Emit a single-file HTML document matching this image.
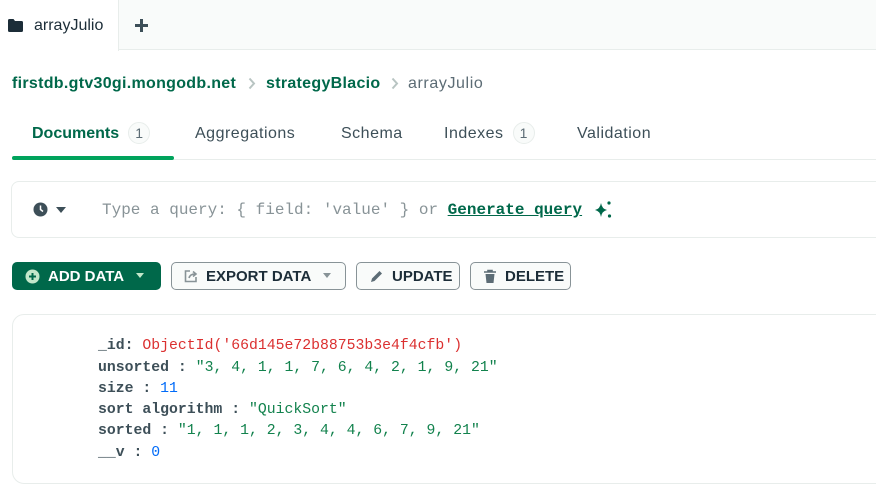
<!DOCTYPE html>
<html><head><style>
*{box-sizing:border-box;margin:0;padding:0}
body{width:876px;height:492px;overflow:hidden;background:#fff;font-family:"Liberation Sans",sans-serif;position:relative;color:#1c2d38}
.abs{position:absolute;white-space:nowrap}
.tabbar{left:0;top:0;width:876px;height:50px;background:#f9fbfa;border-bottom:1px solid #e8edeb}
.tab{left:0;top:0;width:119px;height:51px;background:#fff;border-right:1px solid #e8edeb}
.crumb{top:75px;font-size:16px;font-weight:bold;color:#00684a;letter-spacing:0.3px}
.nav{top:125px;font-size:16px;color:#3d4f58;letter-spacing:0.5px}
.badge{display:inline-block;width:22px;height:22px;border:1px solid #e8edeb;border-radius:11px;background:#f9fbfa;text-align:center;line-height:20px;font-weight:normal;font-size:14px;color:#5c6c75;margin-left:9px;letter-spacing:0}
.mono{font-family:"Liberation Mono",monospace}
.btn{top:262px;height:28px;border:1px solid #889397;border-radius:5px;background:#f9fbfa;font-size:15px;font-weight:bold;color:#1c2d38;display:flex;align-items:center;padding-left:12px;gap:8px}
.doc{left:12px;top:314px;width:880px;height:170px;border:1px solid #e8edeb;border-radius:12px}
.line{left:98px;font-family:"Liberation Mono",monospace;font-size:14.8px;font-weight:bold;color:#3d4f58}
.line span{font-weight:normal}
</style></head><body>
<div class="abs tabbar"></div>
<div class="abs tab"></div>
<svg class="abs" style="left:8px;top:19px" width="15" height="13" viewBox="0 0 15 13"><path d="M0 1.5Q0 0 1.5 0H5.5L7 2H13.5Q15 2 15 3.5V11.5Q15 13 13.5 13H1.5Q0 13 0 11.5Z" fill="#1c2d38"/></svg>
<div class="abs" style="left:34px;top:17px;font-size:16px;color:#1c2d38">arrayJulio</div>
<svg class="abs" style="left:134px;top:18px" width="15" height="15"><path d="M7.5 1V14M1 7.5H14" stroke="#3d4f58" stroke-width="3"/></svg>
<div class="abs crumb" style="left:12px">firstdb.gtv30gi.mongodb.net</div>
<svg class="abs" style="left:248px;top:77px" width="8" height="13"><path d="M1.5 1.5L6 6.5 1.5 11.5" stroke="#b8c4c2" stroke-width="2" fill="none"/></svg>
<div class="abs crumb" style="left:266px">strategyBlacio</div>
<svg class="abs" style="left:391px;top:77px" width="8" height="13"><path d="M1.5 1.5L6 6.5 1.5 11.5" stroke="#b8c4c2" stroke-width="2" fill="none"/></svg>
<div class="abs crumb" style="left:408px;color:#5c6c75;font-weight:normal;letter-spacing:0.6px">arrayJulio</div>
<div class="abs nav" style="left:32px;top:122px;color:#00684a;font-weight:bold;letter-spacing:0">Documents<span class="badge">1</span></div>
<div class="abs nav" style="left:195px">Aggregations</div>
<div class="abs nav" style="left:341px">Schema</div>
<div class="abs nav" style="left:444px;top:122px">Indexes<span class="badge">1</span></div>
<div class="abs nav" style="left:577px">Validation</div>
<div class="abs" style="left:12px;top:159px;width:864px;height:1px;background:#e8edeb"></div>
<div class="abs" style="left:12px;top:156px;width:162px;height:4px;background:#00a35c;border-radius:2px"></div>
<div class="abs" style="left:11px;top:181px;width:880px;height:57px;border:1px solid #e8edeb;border-radius:8px"></div>
<svg class="abs" style="left:33px;top:202px" width="16" height="16"><circle cx="7.5" cy="7.5" r="7" fill="#3d4f58"/><path d="M7.5 3.5V7.5L10 9.5" stroke="#fff" stroke-width="1.5" fill="none"/></svg>
<svg class="abs" style="left:56px;top:207px" width="10" height="6"><path d="M0 0H10L5 6Z" fill="#3d4f58"/></svg>
<div class="abs mono" style="left:102px;top:201px;font-size:16px;color:#889397">Type a query: { field: 'value' } or <b style="color:#00684a;text-decoration:underline">Generate query</b></div>
<svg class="abs" style="left:595px;top:200px" width="18" height="18"><path d="M6 3Q7 9 12 10Q7 11 6 17Q5 11 0 10Q5 9 6 3Z" fill="#00684a"/><circle cx="14" cy="3" r="1.6" fill="#00684a"/><circle cx="14.5" cy="16" r="1.6" fill="#00684a"/></svg>
<div class="abs btn" style="left:12px;width:149px;background:#00684a;border-color:#00684a;color:#fff"><svg width="15" height="15"><circle cx="7.5" cy="7.5" r="7" fill="#c3e7ca"/><path d="M7.5 4V11M4 7.5H11" stroke="#00684a" stroke-width="2"/></svg>ADD DATA<svg width="14" height="6"><path d="M4 0H12L8 5Z" fill="#c3e7ca"/></svg></div>
<div class="abs btn" style="left:171px;width:175px"><svg width="14" height="14"><path d="M6 2H1.5V12.5H12V8" stroke="#889397" stroke-width="1.6" fill="none"/><path d="M5 9Q6 5 11 5M9 2.5L12 5 9 7.5" stroke="#889397" stroke-width="1.6" fill="none"/></svg>EXPORT DATA<svg width="16" height="6"><path d="M4 0H12L8 5Z" fill="#889397"/></svg></div>
<div class="abs btn" style="left:356px;width:104px"><svg width="15" height="15"><path d="M2 13L3 9.5 10.5 2 13 4.5 5.5 12Z" fill="#5c6c75"/></svg>UPDATE</div>
<div class="abs btn" style="left:470px;width:101px"><svg width="14" height="15"><path d="M1 3H13M5 3V1.5H9V3" stroke="#5c6c75" stroke-width="1.6" fill="none"/><path d="M2.5 5H11.5L10.5 14H3.5Z" fill="#5c6c75"/></svg>DELETE</div>
<div class="abs doc"></div>
<div class="abs line" style="top:338px">_id: <span style="color:#db3030">ObjectId('66d145e72b88753b3e4f4cfb')</span></div>
<div class="abs line" style="top:360px">unsorted : <span style="color:#12824d">"3, 4, 1, 1, 7, 6, 4, 2, 1, 9, 21"</span></div>
<div class="abs line" style="top:381px">size : <span style="color:#016bf8">11</span></div>
<div class="abs line" style="top:402px">sort algorithm : <span style="color:#12824d">"QuickSort"</span></div>
<div class="abs line" style="top:423px">sorted : <span style="color:#12824d">"1, 1, 1, 2, 3, 4, 4, 6, 7, 9, 21"</span></div>
<div class="abs line" style="top:445px">__v : <span style="color:#016bf8">0</span></div>
</body></html>
